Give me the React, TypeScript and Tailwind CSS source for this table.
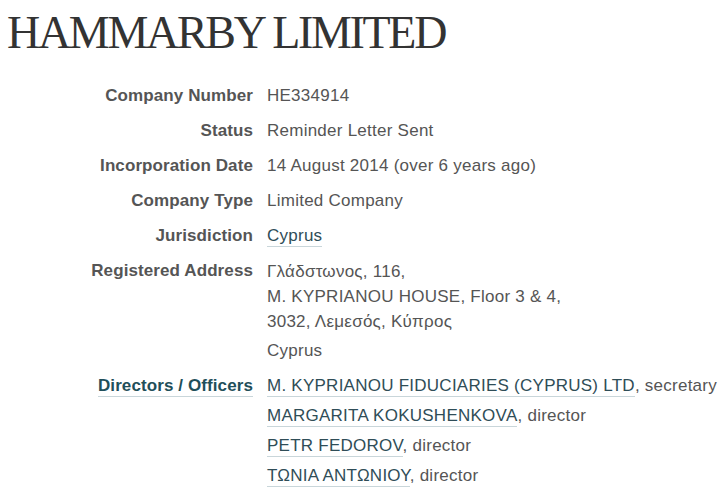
const Link = ({ children }: { children: React.ReactNode }) => (
  <a href="#" className="text-[#2f4d57] border-b border-[#c9d6da] pb-[1px]">
    {children}
  </a>
);

const Label = ({ children, accent }: { children: React.ReactNode; accent?: boolean }) => (
  <dt className={"w-[267px] shrink-0 text-right font-bold pr-[14px] tracking-[0.1px] " + (accent ? "text-[#1f4f5a]" : "text-[#555]")}>
    {accent ? <span className="border-b border-[#c9d6da] pb-[1px]">{children}</span> : children}
  </dt>
);

export default function App() {
  return (
    <div className="bg-white w-[722px] h-[493px] overflow-hidden text-[#555] font-['Liberation_Sans',Arial,sans-serif] text-[17px]">
      <h1 className="font-['Liberation_Serif','Times_New_Roman',serif] text-[#333] text-[46px] leading-none tracking-[-2.3px] pl-[7px] pt-[10px]">
        HAMMARBY LIMITED
      </h1>
      <dl className="mt-[30px] flex flex-col leading-[20px]">
        <div className="flex h-[35px]">
          <Label>Company Number</Label>
          <dd className="tracking-[0.25px]">HE334914</dd>
        </div>
        <div className="flex h-[35px]">
          <Label>Status</Label>
          <dd className="tracking-[0.25px]">Reminder Letter Sent</dd>
        </div>
        <div className="flex h-[35px]">
          <Label>Incorporation Date</Label>
          <dd className="tracking-[0.25px]">14 August 2014 (over 6 years ago)</dd>
        </div>
        <div className="flex h-[35px]">
          <Label>Company Type</Label>
          <dd className="tracking-[0.25px]">Limited Company</dd>
        </div>
        <div className="flex h-[35px]">
          <Label>Jurisdiction</Label>
          <dd className="tracking-[0.25px]">
            <Link>Cyprus</Link>
          </dd>
        </div>
        <div className="flex h-[115px]">
          <Label>Registered Address</Label>
          <dd className="flex flex-col tracking-[0.25px]">
            <span className="leading-[25px] -mt-[2px]">Γλάδστωνος, 116,</span>
            <span className="leading-[25px]">M. KYPRIANOU HOUSE, Floor 3 &amp; 4,</span>
            <span className="leading-[25px]">3032, Λεμεσός, Κύπρος</span>
            <span className="mt-[7px]">Cyprus</span>
          </dd>
        </div>
        <div className="flex">
          <Label accent>Directors / Officers</Label>
          <dd className="flex flex-col gap-[10px] whitespace-nowrap tracking-[0.25px]">
            <span>
              <Link>M. KYPRIANOU FIDUCIARIES (CYPRUS) LTD</Link>, secretary
            </span>
            <span>
              <Link>MARGARITA KOKUSHENKOVA</Link>, director
            </span>
            <span>
              <Link>PETR FEDOROV</Link>, director
            </span>
            <span>
              <Link>ΤΩΝΙΑ ΑΝΤΩΝΙΟΥ</Link>, director
            </span>
          </dd>
        </div>
      </dl>
    </div>
  );
}
